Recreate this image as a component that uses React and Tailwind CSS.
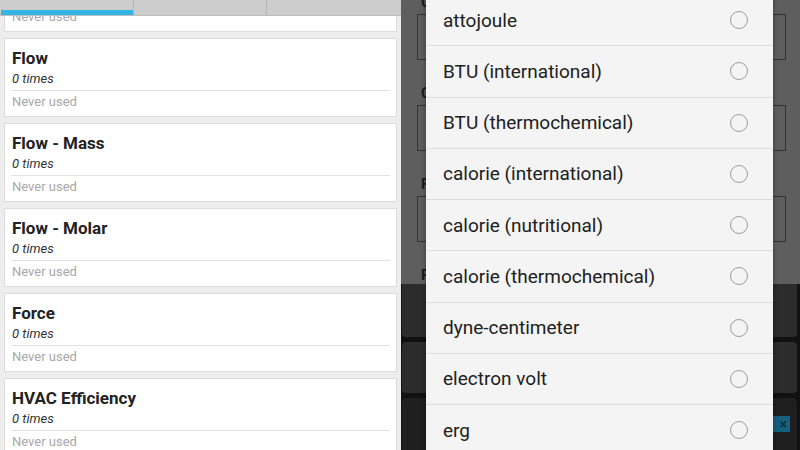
import React from "react";

const categorias = [
  "Energy",
  "Flow",
  "Flow - Mass",
  "Flow - Molar",
  "Force",
  "HVAC Efficiency",
];

const unidades = [
  "attojoule",
  "BTU (international)",
  "BTU (thermochemical)",
  "calorie (international)",
  "calorie (nutritional)",
  "calorie (thermochemical)",
  "dyne-centimeter",
  "electron volt",
  "erg",
];

/* Tarjeta de categoría con contador de uso */
function Tarjeta({ nombre }) {
  return (
    <div className="mx-[4px] flex h-[79px] shrink-0 flex-col border border-[#dcdcdc] bg-white px-[6px] pt-[8px]">
      <div className="pl-px text-[17px] font-bold leading-[22px] text-[#222]">
        {nombre}
      </div>
      <div className="pl-px text-[13px] italic leading-[19px] text-[#333]">
        0 times
      </div>
      <div className="mt-[2px] h-px bg-[#e2e2e2]" />
      <div className="pl-px text-[13px] leading-[22px] text-[#a8a8a8]">
        Never used
      </div>
    </div>
  );
}

function Radio() {
  return (
    <span className="h-[18px] w-[18px] shrink-0 rounded-full border-[1.5px] border-[#9c9c9c]" />
  );
}

export default function App() {
  return (
    <div
      className="flex h-[450px] w-[800px] overflow-hidden"
      style={{ fontFamily: "Roboto, 'Noto Sans', sans-serif" }}
    >
      {/* Lista de categorías */}
      <div className="flex h-full w-[401px] shrink-0 flex-col overflow-hidden bg-[#ededed]">
        <div className="relative z-10 flex h-[16px] shrink-0 border-b border-[#bdbdbd] bg-[#cdcdcd]">
          {[0, 1, 2].map((i) => (
            <div
              key={i}
              className={`flex w-[134px] flex-col justify-between ${
                i < 2 ? "border-r border-[#b8b8b8]" : ""
              }`}
            >
              <span />
              {i === 0 && <span className="ml-px h-[5px] bg-[#33b5e5]" />}
            </div>
          ))}
        </div>
        <div className="mt-[-63px] flex flex-col gap-[6px]">
          {categorias.map((c) => (
            <Tarjeta key={c} nombre={c} />
          ))}
        </div>
      </div>

      {/* Conversor atenuado con el diálogo encima */}
      <div className="relative h-full w-[399px] shrink-0 overflow-hidden bg-[#111]">
        <div className="flex h-[284px] flex-col overflow-hidden bg-[#5e5e5e] pl-[16px] pr-[14px]">
          {["Category", "Convert from", "From value", "Result"].map((l, i) => (
            <div key={l} className={i === 0 ? "mt-[-10px]" : "mt-[2px]"}>
              <div className="pl-[4px] text-[15px] font-bold leading-[24px] text-[#1b1b1b]">
                {l}
              </div>
              <div className="h-[46px] border-[1.5px] border-[#333] bg-[#5e5e5e]" />
              <div className="h-[19px]" />
            </div>
          ))}
        </div>
        <div className="flex flex-col gap-[5px] pl-px pr-[3px]">
          <div className="h-[53px] rounded-b-[4px] bg-[#2c2c2c]" />
          <div className="h-[51px] rounded-[4px] bg-[#2c2c2c]" />
          <div className="flex h-[56px] justify-end rounded-[4px] bg-[#1f1f1f] pr-[7px] pt-[18px]">
            <div className="flex h-[16px] w-[30px] items-center justify-end bg-[#14607e] pr-[3px] text-[14px] leading-none text-[#0b2a36]">
              ×
            </div>
          </div>
        </div>

        <div className="absolute left-[25px] top-[-5px] w-[347px] bg-[#f4f4f4] shadow-[0_0_6px_rgba(0,0,0,0.35)]">
          {unidades.map((u) => (
            <div
              key={u}
              className="flex h-[51.25px] items-center justify-between border-b border-[#dedede] pl-[17px] pr-[25px]"
            >
              <span className="text-[19px] leading-none text-[#202020]">{u}</span>
              <Radio />
            </div>
          ))}
        </div>
      </div>
    </div>
  );
}
